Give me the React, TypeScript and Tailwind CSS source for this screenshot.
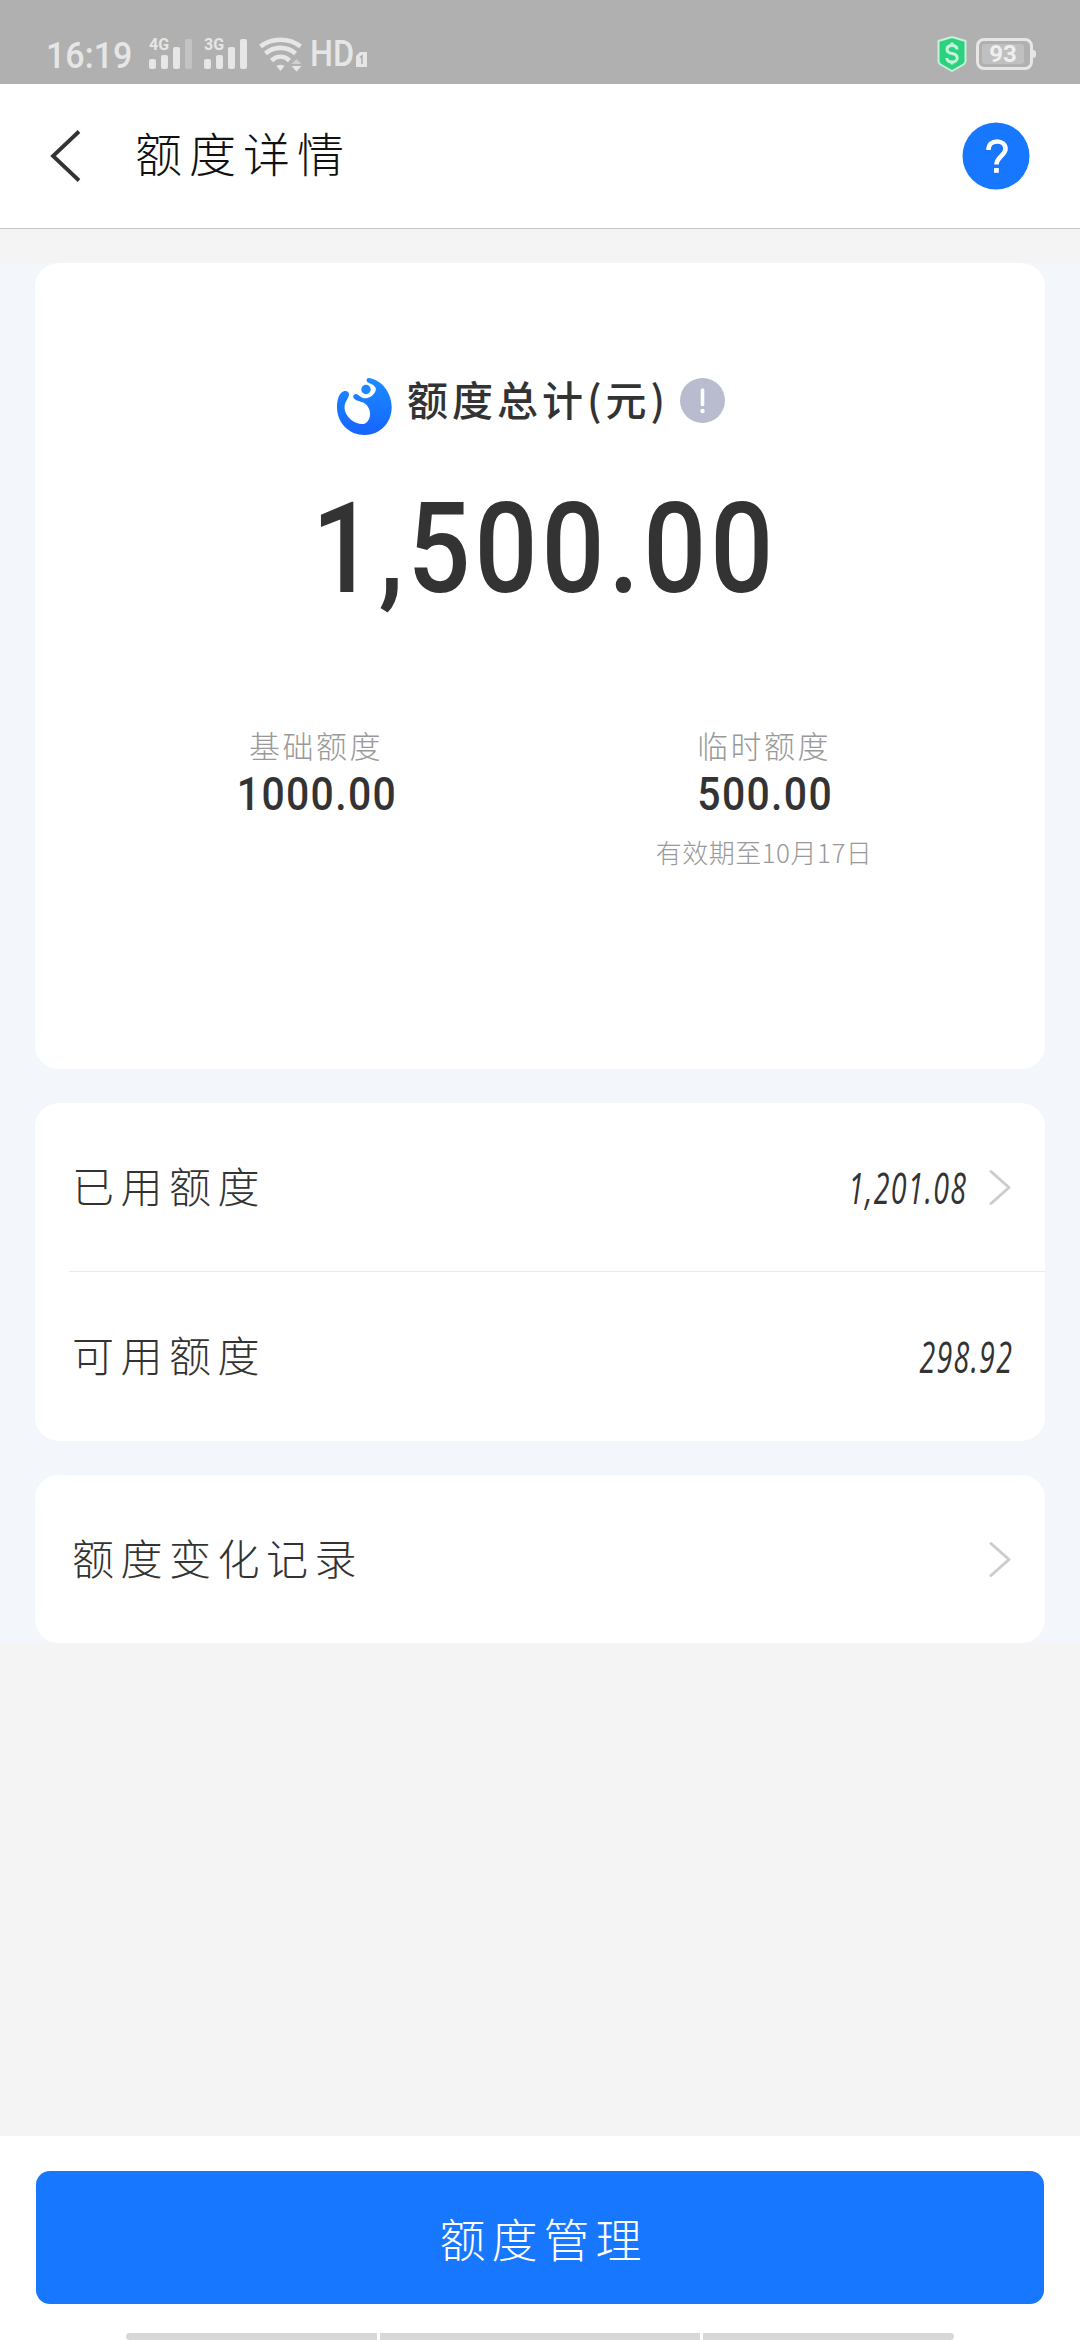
import type { ReactNode } from "react";

export default function App() {
    return (
        <div className="flex h-[2340px] w-[1080px] flex-col overflow-hidden bg-[#f4f4f4] font-['Noto_Sans_CJK_SC',sans-serif] text-[#333]">
            <StatusBar />
            <Header />
            <main className="mt-[34px] flex flex-col gap-[34px] bg-[#f3f6fb] px-[35px]">
                <TotalCard />
                <section className="h-[338px] rounded-[24px] bg-white">
                    <Row label="已用额度" amount="1,201.08" arrow />
                    <div className="ml-[34px] h-px bg-[#ebebeb]" />
                    <Row label="可用额度" amount="298.92" />
                </section>
                <section className="h-[168px] rounded-[24px] bg-white">
                    <Row label="额度变化记录" arrow />
                </section>
            </main>
            <Footer />
        </div>
    );
}

function StatusBar() {
    return (
        <div className="flex h-[84px] shrink-0 items-start bg-[#b0b0b0] pl-[46px] font-[Roboto,sans-serif] text-[#e6e6e6]">
            <span className="mt-[34px] w-[103px] origin-left scale-x-[0.92] text-[37px] leading-[43px] font-medium">
                16:19
            </span>
            <Signal label="4G" weak />
            <Signal label="3G" />
            <Wifi />
            <span className="mt-[33px] ml-[8px] w-[46px] origin-left scale-x-[0.9] text-[36px] leading-[43px] font-medium">
                HD
            </span>
            <svg className="mt-[52px] h-[15px] w-[11px]" viewBox="0 0 11 15">
                <path d="M4 0H11V15H0V4Z" fill="#e6e6e6" />
                <path d="M4 5.5L6 4V12" fill="none" stroke="#b0b0b0" strokeWidth="1.6" />
            </svg>
            <svg className="mt-[36px] ml-[570px] h-[36px] w-[30px]" viewBox="0 0 30 36">
                <path
                    d="M15 1L28.5 5V25Q28.5 27 26.5 28.5L15 35L3.5 28.5Q1.5 27 1.5 25V5Z"
                    fill="#2bd17e"
                    stroke="#c3f3d8"
                    strokeWidth="2"
                    strokeLinejoin="round"
                />
                <path
                    d="M20 13.5C20 10.5 17.5 9.5 15 9.5C12 9.5 10 11 10 13.5C10 16 12 17 15 17.5C18 18 20.2 19.5 20.2 22C20.2 24.5 18 26 15 26C12 26 9.8 24.5 9.8 22M15 6.5V9.5M15 26V28.5"
                    fill="none"
                    stroke="#c3f3d8"
                    strokeWidth="3"
                />
            </svg>
            <div className="mt-[38px] ml-[9px] flex h-[32px] w-[57px] rounded-[8px] border-3 border-[#e6e6e6] p-[3px]">
                <div className="flex w-[42px] items-center justify-center rounded-[3px] bg-[#c0c0c0] text-[24px] leading-none font-bold text-[#efefef]">
                    93
                </div>
            </div>
            <div className="mt-[50px] h-[8px] w-[3px] rounded-r-full bg-[#e6e6e6]" />
        </div>
    );
}

function Signal({ label, weak = false }: { label: string; weak?: boolean }) {
    return (
        <div className="relative mt-[38px] mr-[12px] flex h-[31px] w-[43px] items-end justify-between">
            <span className="absolute -top-px left-0 text-[16px] leading-[16px] font-bold">
                {label}
            </span>
            <div className="h-[10px] w-[7px] rounded-[2px] bg-[#e6e6e6]" />
            <div className="h-[14px] w-[7px] rounded-[2px] bg-[#e6e6e6]" />
            <div className="h-[22px] w-[7px] rounded-[2px] bg-[#e6e6e6]" />
            <div className={`h-[30px] w-[7px] rounded-[2px] ${weak ? "bg-[#c3c3c3]" : "bg-[#e6e6e6]"}`} />
        </div>
    );
}

function Wifi() {
    return (
        <svg className="mt-[37px] h-[35px] w-[43px]" viewBox="0 0 43 35">
            <g fill="none" stroke="#e6e6e6" strokeWidth="4.6">
                <path d="M1.5 9.500C13 0.500 30 0.500 41.500 9.500" />
                <path d="M6.500 16.500C15 9 28 9 36.500 16.500" />
                <path d="M12.500 23.500C18 18.500 25 18.500 30.500 23.500" />
            </g>
            <path d="M17.500 29Q21.500 26.500 25.500 29L21.500 34Z" fill="#e6e6e6" />
            <path d="M37.500 22L42.500 27H32.500Z" fill="#cfcfcf" />
            <path d="M37.500 34.500L42.500 29H32.500Z" fill="#e6e6e6" />
        </svg>
    );
}

function Header() {
    return (
        <header className="flex h-[145px] shrink-0 items-center border-b border-[#c4c4c4] bg-white pr-[50px] pl-[49px]">
            <svg className="-mt-px h-[52px] w-[32px]" viewBox="0 0 32 52">
                <path d="M30 1.5L4 26L30 50.5" fill="none" stroke="#333" strokeWidth="3.8" />
            </svg>
            <h1 className="-mt-[9px] ml-[54px] text-[47px] leading-[56px] font-light tracking-[7px] text-[#111]">
                额度详情
            </h1>
            <svg className="ml-auto size-[68px]" viewBox="0 0 68 68">
                <circle cx="34" cy="34" r="33.5" fill="#1777ff" />
                <path
                    d="M26.5 28C26.5 22.5 30 19.5 35 19.5C40 19.5 43.5 22.5 43.5 27C43.5 33 34.5 35 34.5 42.5"
                    fill="none"
                    stroke="#fff"
                    strokeWidth="4.6"
                />
                <rect x="32" y="46" width="4.8" height="4.8" fill="#fff" />
            </svg>
        </header>
    );
}

function TotalCard() {
    return (
        <section className="h-[806px] rounded-[24px] bg-white pt-[114px]">
            <div className="flex h-[58px] items-start pl-[301px]">
                <Logo />
                <h2 className="-mt-[7px] ml-[14px] w-[269px] text-[41px] leading-[56px] font-medium tracking-[4px] whitespace-nowrap">
                    额度总计(元)
                </h2>
                <svg className="mt-px ml-[4px] size-[45px]" viewBox="0 0 45 45">
                    <circle cx="22.5" cy="22.5" r="22.5" fill="#b9bbcf" />
                    <path d="M22.5 12V26.5" stroke="#fff" strokeWidth="3.6" strokeLinecap="round" />
                    <circle cx="22.5" cy="33" r="2.2" fill="#fff" />
                </svg>
            </div>
            <div className="mt-[39px] flex justify-center pl-[9px] font-[Roboto,sans-serif] text-[126px] leading-[150px] font-medium tracking-[4.5px]">
                <span className="scale-x-[0.88]">1,500.00</span>
            </div>
            <div className="mt-[101px] flex px-[57px]">
                <Part label="基础额度" amount="1000.00" />
                <Part label="临时额度" amount="500.00" note="有效期至10月17日" />
            </div>
        </section>
    );
}

function Part({ label, amount, note }: { label: string; amount: string; note?: string }) {
    return (
        <div className="flex w-[448px] flex-col items-center text-[#999]">
            <div className="text-[31px] leading-[40px] font-light tracking-[2.5px]">{label}</div>
            <div className="mt-[2px] scale-x-[0.89] pl-[2px] font-[Roboto,sans-serif] text-[46px] leading-[54px] font-medium tracking-[1.5px] text-[#333]">
                {amount}
            </div>
            {note && (
                <div className="mt-[13px] text-[26px] leading-[36px] font-light tracking-[0.5px]">
                    {note}
                </div>
            )}
        </div>
    );
}

function Row({ label, amount, arrow = false }: { label: string; amount?: string; arrow?: boolean }) {
    return (
        <div className="flex h-[168px] items-center pr-[34px] pl-[37px]">
            <span className="-mt-[5px] text-[42px] leading-[56px] font-light tracking-[6.5px]">
                {label}
            </span>
            <span className="ml-auto">{amount && <Amount>{amount}</Amount>}</span>
            {arrow && (
                <svg className="ml-[24px] h-[37px] w-[22px]" viewBox="0 0 22 37">
                    <path
                        d="M2 2.5L20 18.5L2 34.5"
                        fill="none"
                        stroke="#ccc"
                        strokeWidth="3"
                        strokeLinecap="round"
                        strokeLinejoin="round"
                    />
                </svg>
            )}
        </div>
    );
}

// narrow slanted figures
function Amount({ children }: { children: ReactNode }) {
    return (
        <span className="-mr-[2px] inline-block origin-right scale-x-[0.65] font-['Open_Sans',sans-serif] text-[44px] leading-[56px] tracking-[2px] italic">
            {children}
        </span>
    );
}

function Logo() {
    return (
        <svg className="h-[59px] w-[57px]" viewBox="0 0 57 59">
            <defs>
                <linearGradient id="logo" x1="0" y1="0" x2="0" y2="1">
                    <stop offset="0" stopColor="#1b8dff" />
                    <stop offset="1" stopColor="#1664ff" />
                </linearGradient>
            </defs>
            <path
                d="M8.5 14C3 15 1 23 1 30C1 46 13 58 28.5 58C44 58 55.7 46 55.7 30C55.7 16 46 3 33 1C30 1 30 4 32 5.5C38 8 41 10 39.5 14C37 20 31 22 27 21C24 20 22 17 20 17C17 17 16.5 20 18.5 22C22 25 29 24 32 30C36 36 34 45 28 47C19 48 9 40 8.5 31C8.5 24 13 22 13 17C13 15 11 13.5 8.5 14Z"
                fill="url(#logo)"
            />
            <circle cx="30" cy="12.5" r="4.7" fill="#1b88ff" />
        </svg>
    );
}

function Footer() {
    return (
        <footer className="mt-auto flex h-[204px] shrink-0 flex-col bg-white px-[36px] pt-[35px]">
            <button className="h-[133px] shrink-0 rounded-[14px] bg-[#1777ff] pl-[7px] text-[46px] font-light tracking-[6px] text-white">
                额度管理
            </button>
            <div className="mt-[29px] flex h-[7px] shrink-0 justify-center gap-[3px]">
                <div className="w-[251px] rounded-l-[4px] bg-[#d8d8d8]" />
                <div className="w-[320px] bg-[#d8d8d8]" />
                <div className="w-[251px] rounded-r-[4px] bg-[#d8d8d8]" />
            </div>
        </footer>
    );
}
